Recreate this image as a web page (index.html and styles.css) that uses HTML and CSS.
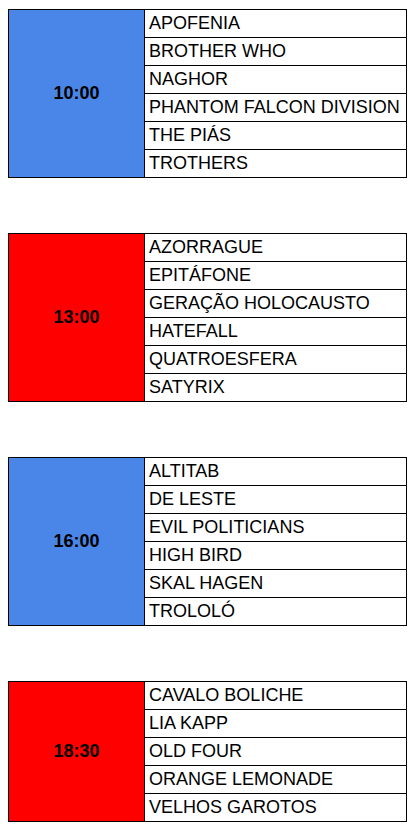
FILE: index.html
```html
<!DOCTYPE html>
<html lang="pt">
<head>
<meta charset="utf-8">
<title>Horários</title>
<link rel="stylesheet" href="styles.css">
</head>
<body>
<div class="schedule">
  <section class="slot">
    <div class="time blue">10:00</div>
    <div class="names">
      <div class="name">APOFENIA</div>
      <div class="name">BROTHER WHO</div>
      <div class="name">NAGHOR</div>
      <div class="name">PHANTOM FALCON DIVISION</div>
      <div class="name">THE PIÁS</div>
      <div class="name">TROTHERS</div>
    </div>
  </section>
  <section class="slot">
    <div class="time red">13:00</div>
    <div class="names">
      <div class="name">AZORRAGUE</div>
      <div class="name">EPITÁFONE</div>
      <div class="name">GERAÇÃO HOLOCAUSTO</div>
      <div class="name">HATEFALL</div>
      <div class="name">QUATROESFERA</div>
      <div class="name">SATYRIX</div>
    </div>
  </section>
  <section class="slot">
    <div class="time blue">16:00</div>
    <div class="names">
      <div class="name">ALTITAB</div>
      <div class="name">DE LESTE</div>
      <div class="name">EVIL POLITICIANS</div>
      <div class="name">HIGH BIRD</div>
      <div class="name">SKAL HAGEN</div>
      <div class="name">TROLOLÓ</div>
    </div>
  </section>
  <section class="slot">
    <div class="time red">18:30</div>
    <div class="names">
      <div class="name">CAVALO BOLICHE</div>
      <div class="name">LIA KAPP</div>
      <div class="name">OLD FOUR</div>
      <div class="name">ORANGE LEMONADE</div>
      <div class="name">VELHOS GAROTOS</div>
    </div>
  </section>
</div>
</body>
</html>
```
FILE: styles.css
```css
html, body {
  margin: 0;
  padding: 0;
  background: #ffffff;
}
body {
  font-family: "Liberation Sans", Arial, sans-serif;
  font-size: 18px;
  color: #000000;
  overflow: hidden;
}
.schedule {
  padding: 9px 0 0 8px;
  display: flex;
  flex-direction: column;
  gap: 55px;
}
.slot {
  width: 399px;
  box-sizing: border-box;
  border: 1px solid #000;
  display: grid;
  grid-template-columns: 136px 1fr;
}
.time {
  box-sizing: border-box;
  border-right: 1px solid #000;
  display: flex;
  align-items: center;
  justify-content: center;
  font-weight: bold;
}
.blue { background: #4a86e8; }
.red { background: #ff0000; }
.names {
  display: flex;
  flex-direction: column;
}
.name {
  box-sizing: border-box;
  height: 28px;
  line-height: 27px;
  padding-left: 4px;
  border-bottom: 1px solid #000;
  white-space: nowrap;
}
.name:last-child {
  height: 27px;
  border-bottom: none;
}
```
